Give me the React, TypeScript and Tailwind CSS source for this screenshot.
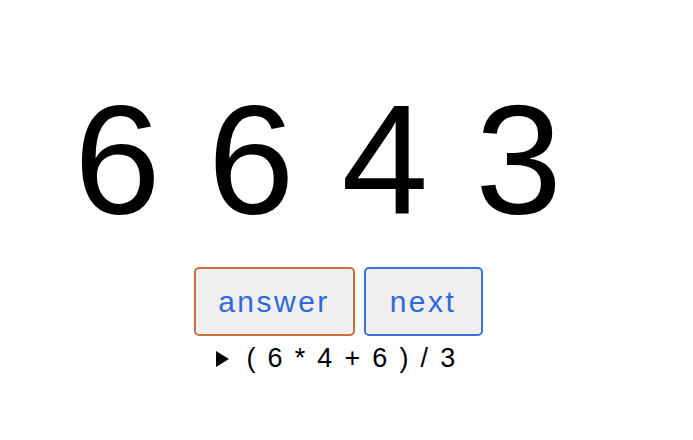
export default function App() {
  const digits = [6, 6, 4, 3]
  return (
    <div className="h-[440px] w-[676px] bg-white" style={{ fontFamily: '"Liberation Sans", Arial, sans-serif' }}>
      <div className="flex flex-col items-center pt-[79px]">
        <div className="flex gap-[47px] self-start ml-[74px] text-[156px] leading-[160px] text-black">
          {digits.map((d, i) => (
            <span key={i}>{d}</span>
          ))}
        </div>
        <div className="mt-[28px] flex gap-[9px]">
          <button className="h-[69px] w-[161px] rounded-[5px] border-2 border-[#c96f40] bg-[#efefef] text-[30px] tracking-[2.5px] text-[#3169d8]">
            answer
          </button>
          <button className="h-[69px] w-[119px] rounded-[5px] border-2 border-[#3a72dc] bg-[#efefef] text-[30px] tracking-[2.5px] text-[#3169d8]">
            next
          </button>
        </div>
        <div className="mt-[6px] flex items-center text-[27px] leading-[32px] tracking-[2.3px] text-black">
          <svg width="13" height="16" viewBox="0 0 13 16" className="mr-[18px] mt-[1px] -ml-[3px]">
            <path d="M0 0 L13 8 L0 16 Z" fill="black" />
          </svg>
          <span className="whitespace-pre">( 6 * 4 + 6 ) / 3</span>
        </div>
      </div>
    </div>
  )
}
